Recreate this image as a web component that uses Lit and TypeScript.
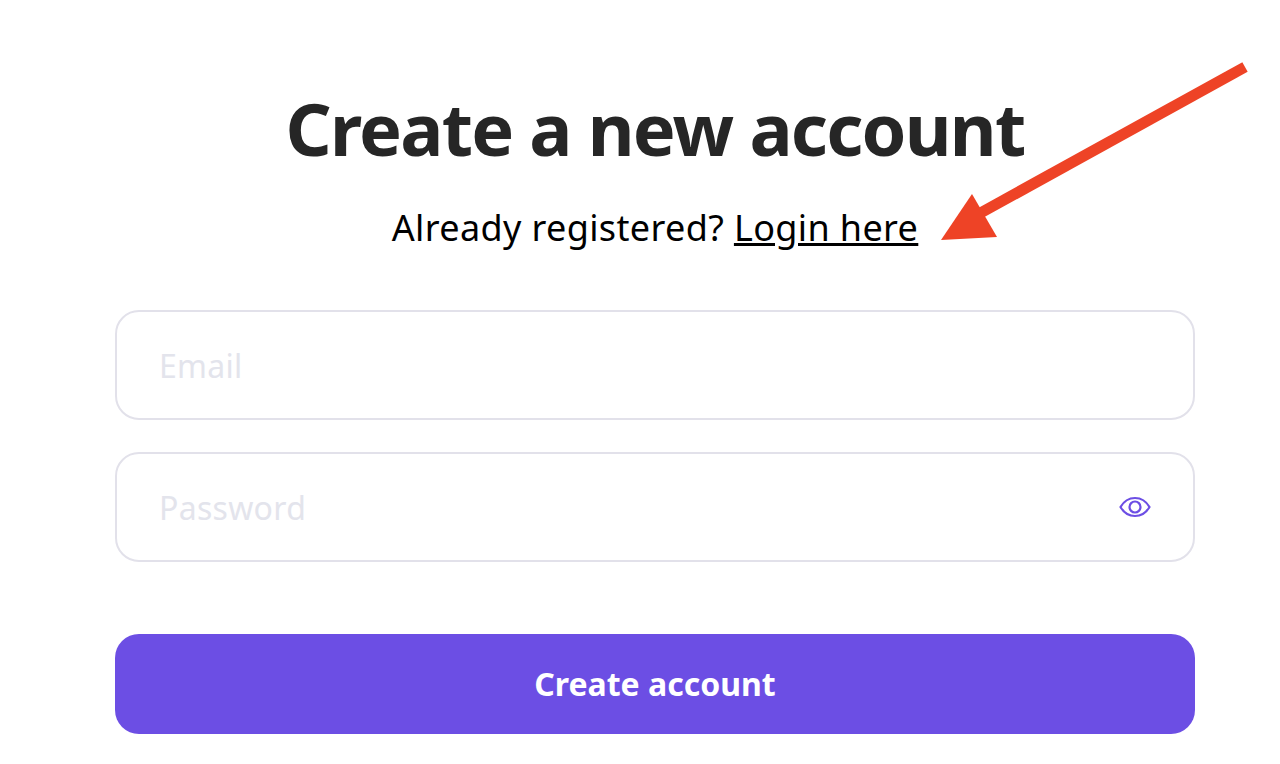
import { LitElement, html, css } from "lit";
import { customElement } from "lit/decorators.js";

@customElement("app-root")
export class AppRoot extends LitElement {
  static styles = css`
    :host {
      display: block;
      position: relative;
      width: 1280px;
      height: 764px;
      overflow: hidden;
      background: #fff;
      font-family: "Noto Sans", sans-serif;
    }
    .page {
      display: flex;
      flex-direction: column;
      align-items: center;
      padding: 84px 85px 0 115px;
    }
    h1 {
      margin: 0;
      font-size: 72px;
      line-height: 88px;
      font-weight: 700;
      color: #262626;
      letter-spacing: -1.75px;
    }
    .sub {
      margin: 33px 0 0;
      font-size: 36px;
      line-height: 46px;
      letter-spacing: 0.37px;
      color: #000;
    }
    .sub a {
      color: #000;
      text-decoration: underline;
    }
    form {
      width: 1080px;
      margin-top: 59px;
      display: flex;
      flex-direction: column;
      gap: 32px;
    }
    .field {
      box-sizing: border-box;
      height: 110px;
      border: 2px solid #e2e1ea;
      border-radius: 24px;
      padding: 0 42px;
      display: flex;
      align-items: center;
      justify-content: space-between;
      font-size: 32px;
      letter-spacing: 0.3px;
      color: #e3e4ec;
    }
    button {
      margin-top: 40px;
      height: 100px;
      border: 0;
      border-radius: 24px;
      background: #6c4ee4;
      color: #fff;
      font: 700 32px "Noto Sans", sans-serif;
      padding: 0 0 2px;
    }
    .arrow {
      position: absolute;
      left: 0;
      top: 0;
      pointer-events: none;
    }
  `;
  render() {
    return html`
      <div class="page">
        <h1>Create a new account</h1>
        <p class="sub">Already registered? <a href="#">Login here</a></p>
        <form>
          <div class="field"><span>Email</span></div>
          <div class="field">
            <span>Password</span>
            <svg width="32" height="24" viewBox="0 0 32 24" fill="none" stroke="#6c4ee4" stroke-width="2.2">
              <path d="M1.5 12C5 6 10 3 16 3s11 3 14.500 9C27 18 22 21 16 21S5 18 1.500 12Z" />
              <circle cx="16" cy="12" r="5.500" />
            </svg>
          </div>
          <button type="button">Create account</button>
        </form>
      </div>
      <svg class="arrow" width="1280" height="764">
        <path d="M1245 67L975 216" stroke="#ee4326" stroke-width="11" fill="none" />
        <path d="M941 240L972 194L997 237Z" fill="#ee4326" />
      </svg>
    `;
  }
}
